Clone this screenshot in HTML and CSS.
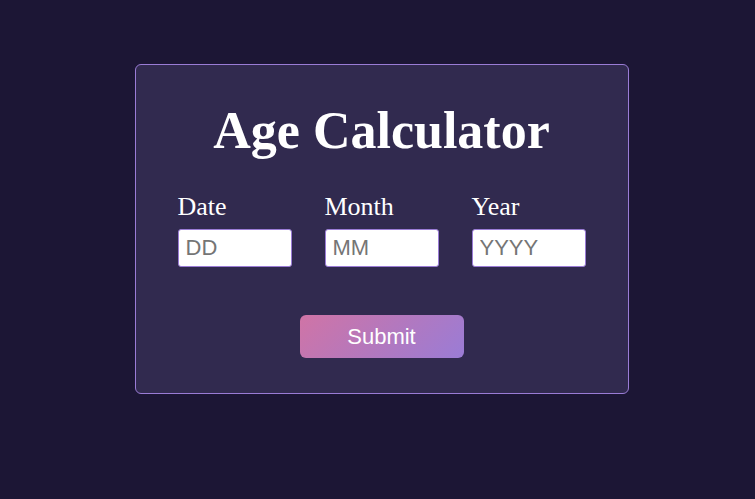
FILE: index.html
```html
<!DOCTYPE html>
<html lang="en">
<head>
<meta charset="utf-8">
<title>Age Calculator</title>
<link rel="stylesheet" href="styles.css">
</head>
<body>
<main class="card">
  <h1 class="title">Age Calculator</h1>
  <div class="fields">
    <label class="field">
      <span class="field-label">Date</span>
      <input class="field-input" type="text" placeholder="DD">
    </label>
    <label class="field">
      <span class="field-label">Month</span>
      <input class="field-input" type="text" placeholder="MM">
    </label>
    <label class="field">
      <span class="field-label">Year</span>
      <input class="field-input" type="text" placeholder="YYYY">
    </label>
  </div>
  <button class="submit" type="button">Submit</button>
</main>
</body>
</html>
```
FILE: styles.css
```css
html, body {
  margin: 0;
  padding: 0;
}
body {
  background: #1c1635;
  min-height: 499px;
  padding-left: 8px;
  box-sizing: border-box;
  display: flex;
  justify-content: center;
  align-items: flex-start;
  font-family: "Liberation Serif", "Times New Roman", serif;
  color: #ffffff;
}
.card {
  margin-top: 64px;
  width: 492px;
  box-sizing: content-box;
  background: #312a4f;
  border: 1px solid #9a7cd6;
  border-radius: 6px;
  padding: 36px 0 35px;
  display: flex;
  flex-direction: column;
  align-items: center;
}
.title {
  margin: 0;
  font-size: 52px;
  font-weight: bold;
  line-height: normal;
  text-align: center;
}
.fields {
  margin-top: 32px;
  display: grid;
  grid-template-columns: repeat(3, 114px);
  column-gap: 33px;
}
.field {
  display: flex;
  flex-direction: column;
  gap: 7px;
}
.field-label {
  font-size: 26px;
  line-height: normal;
}
.field-input {
  box-sizing: border-box;
  width: 114px;
  height: 38px;
  margin: 0;
  padding: 0 7px;
  border: 1px solid #9a7cd6;
  border-radius: 3px;
  background: #ffffff;
  font-family: "Liberation Sans", Arial, sans-serif;
  font-size: 22px;
  color: #222;
  outline: none;
}
.field-input::placeholder {
  color: #757575;
}
.submit {
  margin-top: 48px;
  width: 164px;
  height: 43px;
  border: none;
  border-radius: 6px;
  background: linear-gradient(135deg, #d074a6 0%, #b478bd 50%, #9a7cd6 100%);
  color: #ffffff;
  font-family: "Liberation Sans", Arial, sans-serif;
  font-size: 22px;
  cursor: pointer;
  padding: 0;
}
```
